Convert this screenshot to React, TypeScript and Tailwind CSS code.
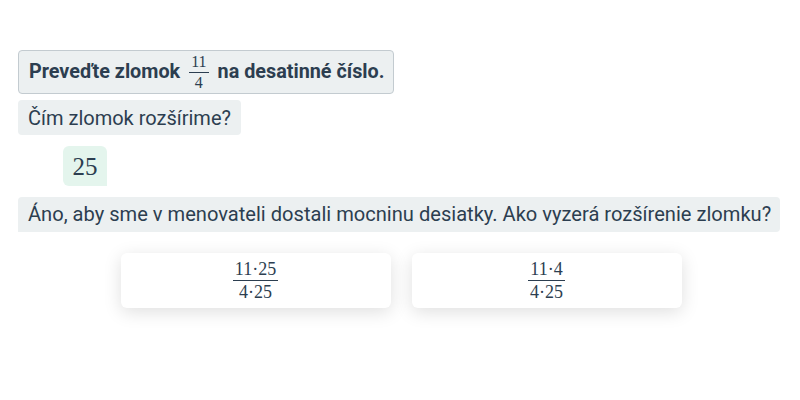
import React from 'react';

const sans = { fontFamily: 'Roboto, "Noto Sans", sans-serif' };
const serif = { fontFamily: '"Liberation Serif", "DejaVu Serif", serif' };

function Frac({ num, den, size = 'text-[18px]' }: { num: string; den: string; size?: string }) {
  return (
    <span className={`inline-flex flex-col items-center align-middle leading-none font-normal ${size} text-[#2c3e50]`} style={serif}>
      <span className="px-[2px] pb-[2px]">{num}</span>
      <span className="self-stretch border-t border-[#2c3e50]" />
      <span className="px-[2px] pt-[2px]">{den}</span>
    </span>
  );
}

export default function App() {
  return (
    <div className="w-[800px] h-[400px] bg-white text-[#2c3e50] pt-[50px] pl-[18px] pr-[20px]" style={sans}>
      <div className="flex flex-col items-start">
        <div className="h-[44px] flex items-center gap-[9px] pl-[10px] pr-[9px] bg-[#ecf0f1] border border-[#c3cbd0] rounded-[4px] text-[19.8px] font-bold whitespace-nowrap">
          <span>Preveďte zlomok</span>
          <Frac num="11" den="4" size="text-[16px]" />
          <span>na desatinné číslo.</span>
        </div>

        <div className="mt-[6px] h-[35px] flex items-center px-[10px] bg-[#ecf0f1] rounded-[4px] text-[20px] whitespace-nowrap">
          Čím zlomok rozšírime?
        </div>

        <div className="mt-[11px] ml-[45px] w-[44px] h-[40px] flex items-center justify-center bg-[#e4f5ed] rounded-[6px] rounded-br-none">
          <span className="text-[25px] leading-none" style={serif}>25</span>
        </div>

        <div className="mt-[11px] self-stretch h-[35px] flex items-center px-[10px] bg-[#ecf0f1] rounded-[4px] rounded-bl-none text-[20.1px] whitespace-nowrap">
          Áno, aby sme v menovateli dostali mocninu desiatky. Ako vyzerá rozšírenie zlomku?
        </div>
      </div>

      <div className="mt-[21px] flex justify-center gap-[21px] -ml-[18px] -mr-[20px] pl-[2px]">
        <div className="w-[270px] h-[55px] flex items-center justify-center bg-white rounded-[6px] shadow-[0_4px_18px_rgba(0,0,0,0.13)]">
          <Frac num="11·25" den="4·25" />
        </div>
        <div className="w-[270px] h-[55px] flex items-center justify-center bg-white rounded-[6px] shadow-[0_4px_18px_rgba(0,0,0,0.13)]">
          <Frac num="11·4" den="4·25" />
        </div>
      </div>
    </div>
  );
}
